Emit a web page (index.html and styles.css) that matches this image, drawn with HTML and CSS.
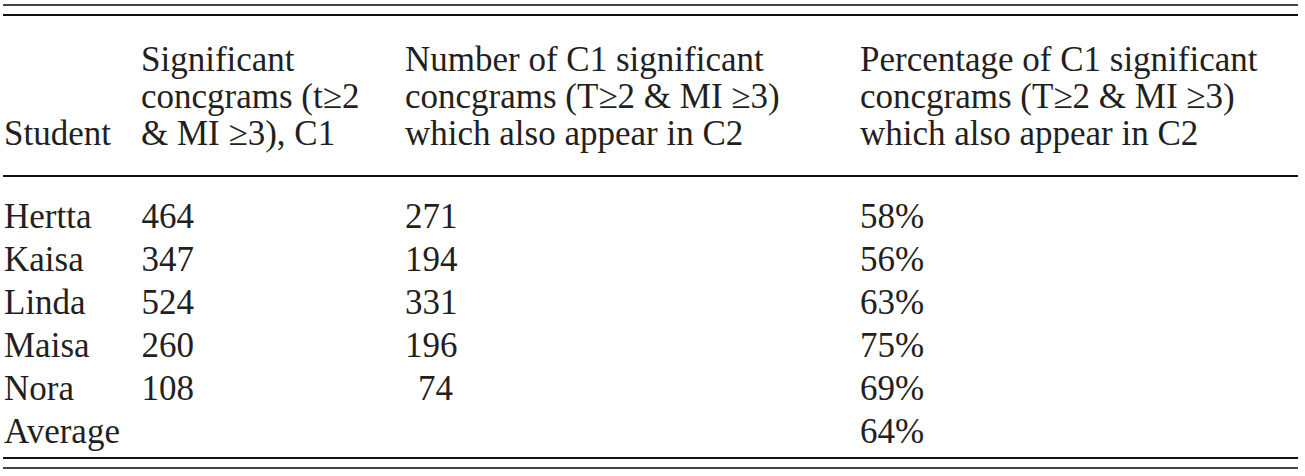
FILE: index.html
```html
<!DOCTYPE html>
<html lang="en">
<head>
    <meta charset="UTF-8">
    <title>Concgrams table</title>
    <link rel="stylesheet" href="styles.css">
</head>
<body>
    <div class="table-wrap">
        <table class="concgrams">
            <thead>
                <tr>
                    <th class="col-student">Student</th>
                    <th class="col-c1">Significant<br>concgrams (t≥2<br>&amp; MI ≥3), C1</th>
                    <th class="col-num">Number of C1 significant<br>concgrams (T≥2 &amp; MI ≥3)<br>which also appear in C2</th>
                    <th class="col-pct">Percentage of C1 significant<br>concgrams (T≥2 &amp; MI ≥3)<br>which also appear in C2</th>
                </tr>
            </thead>
            <tbody>
                <tr class="first">
                    <td>Hertta</td>
                    <td><span class="n2">464</span></td>
                    <td><span class="n3">271</span></td>
                    <td><span class="n4">58%</span></td>
                </tr>
                <tr>
                    <td>Kaisa</td>
                    <td><span class="n2">347</span></td>
                    <td><span class="n3">194</span></td>
                    <td><span class="n4">56%</span></td>
                </tr>
                <tr>
                    <td>Linda</td>
                    <td><span class="n2">524</span></td>
                    <td><span class="n3">331</span></td>
                    <td><span class="n4">63%</span></td>
                </tr>
                <tr>
                    <td>Maisa</td>
                    <td><span class="n2">260</span></td>
                    <td><span class="n3">196</span></td>
                    <td><span class="n4">75%</span></td>
                </tr>
                <tr>
                    <td>Nora</td>
                    <td><span class="n2">108</span></td>
                    <td><span class="n3">74</span></td>
                    <td><span class="n4">69%</span></td>
                </tr>
                <tr class="last">
                    <td>Average</td>
                    <td></td>
                    <td></td>
                    <td><span class="n4">64%</span></td>
                </tr>
            </tbody>
        </table>
    </div>
</body>
</html>
```

FILE: styles.css
```css
body {
    margin: 0;
    background: #ffffff;
    color: #231f20;
    font-family: 'Liberation Serif', 'Times New Roman', serif;
    font-size: 35px;
    font-variant-numeric: oldstyle-nums;
}
.table-wrap {
    width: 1295px;
    margin: 4px 0 0 3px;
    padding: 8px 0;
    border-top: 2px solid #444;
    border-bottom: 2px solid #444;
}
.concgrams {
    width: 100%;
    border-collapse: collapse;
    border-top: 2px solid #111;
    border-bottom: 2px solid #111;
    table-layout: fixed;
}
.concgrams th {
    font-weight: normal;
    text-align: left;
    vertical-align: bottom;
    white-space: nowrap;
    line-height: 37px;
    padding: 25px 0 23px 0;
    border-bottom: 2px solid #111;
}
.concgrams td {
    padding: 0;
    height: 43px;
    line-height: 43px;
    vertical-align: middle;
    white-space: nowrap;
}
.concgrams tr.first td {
    padding-top: 18px;
}
.concgrams tr.last td {
    padding-bottom: 4px;
}
.col-student {
    width: 137px;
}
.col-c1 {
    width: 264px;
}
.col-num {
    width: 455px;
}
.concgrams th.col-student,
.concgrams td:first-child {
    padding-left: 1px;
}
.n2, .n3, .n4 {
    display: inline-block;
    text-align: right;
}
.n2 {
    width: 53px;
}
.n3 {
    width: 48px;
}
.n4 {
    width: 62px;
}
```
